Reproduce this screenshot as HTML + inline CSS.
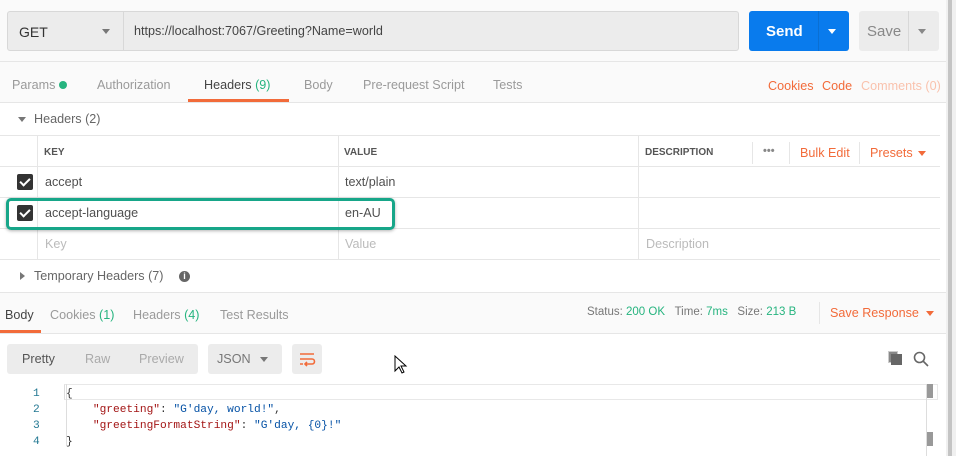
<!DOCTYPE html>
<html><head><style>
*{box-sizing:border-box;margin:0;padding:0}
body{width:956px;height:456px;overflow:hidden;background:#fff;font-family:"Liberation Sans",sans-serif;font-size:12.6px;color:#505050;position:relative}
.a{position:absolute;white-space:nowrap}
.g{color:#26b47f}.o{color:#f26b3a}.l{color:#9a9a9a}
.hl{position:absolute;height:1px;background:#e6e6e6}
.vl{position:absolute;width:1px;background:#e6e6e6}
.cb{position:absolute;width:16px;height:16px;background:#333;border-radius:2px}
.cb:after{content:"";position:absolute;left:5px;top:2px;width:4px;height:8px;border:solid #fff;border-width:0 2px 2px 0;transform:rotate(45deg)}
.mono{font-family:"Liberation Mono",monospace;font-size:11.2px}
</style></head><body>
<div class="a" style="left:0;top:0;width:946px;height:102px;background:#fafafa"></div>
<div class="a" style="left:0;top:292px;width:946px;height:41px;background:#fafafa"></div>
<div class="a" style="left:7px;top:11px;width:732px;height:40px;background:#ececec;border:1px solid #d8d8d8;border-radius:3px"></div>
<div class="vl" style="left:123px;top:12px;height:38px;background:#d8d8d8"></div>
<div class="a" style="left:19px;top:24px;font-size:14px;color:#333">GET</div>
<div class="a" style="left:102px;top:29px;border:4px solid transparent;border-top:5px solid #777"></div>
<div class="a" style="left:134px;top:24px;color:#444">https://localhost:7067/Greeting?Name=world</div>
<div class="a" style="left:749px;top:11px;width:100px;height:40px;background:#097bed;border-radius:3px"></div>
<div class="vl" style="left:818px;top:11px;height:40px;background:#0a6fd3"></div>
<div class="a" style="left:766px;top:23px;font-size:15px;font-weight:bold;color:#fff">Send</div>
<div class="a" style="left:828px;top:29px;border:4px solid transparent;border-top:5px solid #fff"></div>
<div class="a" style="left:859px;top:11px;width:80px;height:40px;background:#ececec;border-radius:3px"></div>
<div class="vl" style="left:908px;top:11px;height:40px;background:#d8d8d8"></div>
<div class="a" style="left:867px;top:23px;font-size:15px;color:#888">Save</div>
<div class="a" style="left:918px;top:29px;border:4px solid transparent;border-top:5px solid #888"></div>
<div class="hl" style="left:0;top:61px;width:946px"></div>
<div class="a l" style="left:12px;top:78px">Params <span style="display:inline-block;width:8px;height:8px;border-radius:4px;background:#26b47f"></span></div>
<div class="a l" style="left:97px;top:78px">Authorization</div>
<div class="a" style="left:204px;top:78px;color:#444">Headers <span class="g">(9)</span></div>
<div class="a" style="left:188px;top:99px;width:101px;height:3px;background:#f26b3a"></div>
<div class="a l" style="left:304px;top:78px">Body</div>
<div class="a l" style="left:363px;top:78px">Pre-request Script</div>
<div class="a l" style="left:493px;top:78px">Tests</div>
<div class="a o" style="left:768px;top:79px">Cookies</div>
<div class="a o" style="left:822px;top:79px">Code</div>
<div class="a" style="left:861px;top:79px;color:#f9c2ad">Comments (0)</div>
<div class="hl" style="left:0;top:102px;width:946px"></div>
<div class="a" style="left:18px;top:117px;border:4px solid transparent;border-top:5px solid #777"></div>
<div class="a" style="left:34px;top:112px;color:#666">Headers (2)</div>
<div class="hl" style="left:0;top:135px;width:940px"></div>
<div class="hl" style="left:0;top:166px;width:940px"></div>
<div class="hl" style="left:0;top:197px;width:940px"></div>
<div class="hl" style="left:0;top:228px;width:940px"></div>
<div class="hl" style="left:0;top:259px;width:940px"></div>
<div class="vl" style="left:37px;top:135px;height:124px"></div>
<div class="vl" style="left:338px;top:135px;height:124px"></div>
<div class="vl" style="left:638px;top:135px;height:124px"></div>
<div class="vl" style="left:752px;top:142px;height:22px"></div>
<div class="vl" style="left:789px;top:142px;height:22px"></div>
<div class="vl" style="left:859px;top:142px;height:22px"></div>
<div class="a" style="left:44px;top:147px;font-size:10px;font-weight:bold;color:#555">KEY</div>
<div class="a" style="left:344px;top:147px;font-size:10px;font-weight:bold;color:#555">VALUE</div>
<div class="a" style="left:645px;top:147px;font-size:10px;font-weight:bold;color:#555">DESCRIPTION</div>
<div class="a" style="left:763px;top:145px;color:#888;font-weight:bold;font-size:11px">•••</div>
<div class="a o" style="left:800px;top:146px">Bulk Edit</div>
<div class="a o" style="left:870px;top:146px">Presets</div>
<div class="a" style="left:918px;top:151px;border:4px solid transparent;border-top:5px solid #f26b3a"></div>
<div class="cb" style="left:17px;top:174px"></div>
<div class="a" style="left:45px;top:175px">accept</div>
<div class="a" style="left:345px;top:175px">text/plain</div>
<div class="cb" style="left:17px;top:205px"></div>
<div class="a" style="left:45px;top:206px">accept-language</div>
<div class="a" style="left:345px;top:206px">en-AU</div>
<div class="a" style="left:6px;top:198px;width:389px;height:32px;border:3px solid #17a689;border-radius:5px;box-shadow:0 1px 3px rgba(0,0,0,.3)"></div>
<div class="a" style="left:45px;top:237px;color:#bbb">Key</div>
<div class="a" style="left:345px;top:237px;color:#bbb">Value</div>
<div class="a" style="left:646px;top:237px;color:#bbb">Description</div>
<div class="a" style="left:20px;top:272px;border:4px solid transparent;border-left:5px solid #777"></div>
<div class="a" style="left:34px;top:269px;color:#666">Temporary Headers (7)</div>
<div class="a" style="left:179px;top:271px;width:11px;height:11px;border-radius:6px;background:#666;color:#fff;font-size:9px;text-align:center;line-height:11px;font-weight:bold">i</div>
<div class="hl" style="left:0;top:292px;width:946px"></div>
<div class="a" style="left:5px;top:308px;color:#444">Body</div>
<div class="a" style="left:0;top:330px;width:41px;height:3px;background:#f26b3a"></div>
<div class="a l" style="left:50px;top:308px">Cookies <span class="g">(1)</span></div>
<div class="a l" style="left:133px;top:308px">Headers <span class="g">(4)</span></div>
<div class="a l" style="left:220px;top:308px">Test Results</div>
<div class="a" style="left:587px;top:306px;font-size:11.5px;color:#777">Status: <span class="g">200 OK</span>&nbsp;&nbsp;&nbsp;Time: <span class="g">7ms</span>&nbsp;&nbsp;&nbsp;Size: <span class="g">213 B</span></div>
<div class="vl" style="left:819px;top:302px;height:22px"></div>
<div class="a o" style="left:830px;top:306px">Save Response</div>
<div class="a" style="left:926px;top:311px;border:4px solid transparent;border-top:5px solid #f26b3a"></div>
<div class="hl" style="left:0;top:333px;width:946px"></div>
<div class="a" style="left:7px;top:344px;width:191px;height:30px;background:#ececec;border-radius:3px"></div>
<div class="a" style="left:22px;top:352px;color:#555">Pretty</div>
<div class="a" style="left:85px;top:352px;color:#aaa">Raw</div>
<div class="a" style="left:139px;top:352px;color:#aaa">Preview</div>
<div class="a" style="left:208px;top:344px;width:74px;height:30px;background:#ececec;border-radius:3px"></div>
<div class="a" style="left:217px;top:352px;color:#777">JSON</div>
<div class="a" style="left:260px;top:357px;border:4px solid transparent;border-top:5px solid #777"></div>
<div class="a" style="left:292px;top:344px;width:30px;height:30px;background:#ececec;border-radius:3px"></div>
<svg class="a" style="left:298px;top:350px" width="18" height="18" viewBox="0 0 18 18" fill="none" stroke="#f26b3a" stroke-width="1.6"><path d="M2 4h14M2 9h12a2.5 2.5 0 0 1 0 5H8M2 14h3M9 12l-2 2 2 2"/></svg>
<svg class="a" style="left:394px;top:355px" width="14" height="20" viewBox="0 0 14 20"><path d="M1 1v15l4-4 3 6 2-1-3-6h5z" fill="#fff" stroke="#000"/></svg>
<div class="a" style="left:888px;top:351px;width:10px;height:12px;background:#888;border:1px solid #ccc"></div>
<div class="a" style="left:891px;top:354px;width:11px;height:11px;background:#666"></div>
<svg class="a" style="left:913px;top:351px" width="16" height="16" viewBox="0 0 16 16" fill="none" stroke="#666" stroke-width="1.6"><circle cx="6.5" cy="6.5" r="5"/><path d="M10 10l5 5"/></svg>
<div class="a" style="left:64px;top:384px;width:874px;height:16px;border:1px solid #e8e8e8;border-left:1px solid #ddd"></div>
<div class="vl" style="left:66px;top:384px;height:62px;background:#ddd"></div>
<div class="vl" style="left:926px;top:384px;height:72px;background:#ddd"></div>
<div class="a" style="left:927px;top:384px;width:6px;height:14px;background:#999"></div>
<div class="a" style="left:927px;top:432px;width:6px;height:14px;background:#999"></div>
<div class="a mono" style="left:33px;top:386px;color:#237893;line-height:16px">1<br>2<br>3<br>4</div>
<div class="a mono" style="left:66px;top:386px;line-height:16px;color:#333">{<br>&nbsp;&nbsp;&nbsp;&nbsp;<span style="color:#a31515">"greeting"</span>: <span style="color:#0451a5">"G'day, world!"</span>,<br>&nbsp;&nbsp;&nbsp;&nbsp;<span style="color:#a31515">"greetingFormatString"</span>: <span style="color:#0451a5">"G'day, {0}!"</span><br>}</div>
<div class="a" style="left:946px;top:0;width:10px;height:456px;background:#f0f0f0"></div>
<div class="a" style="left:948px;top:0;width:4px;height:456px;background:#c4c4c4"></div>
</body></html>
